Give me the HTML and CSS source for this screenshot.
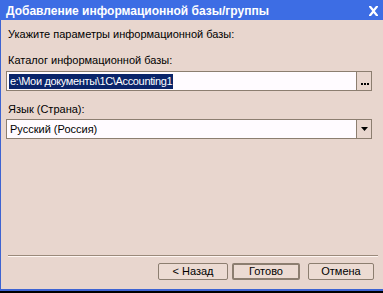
FILE: index.html
```html
<!DOCTYPE html>
<html>
<head>
<meta charset="utf-8">
<link rel="stylesheet" href="styles.css">
</head>
<body>
<div class="window">
  <div class="titlebar">
    <span class="title">Добавление информационной базы/группы</span>
    <svg class="close" width="11" height="10" viewBox="0 0 11 10">
      <path d="M1 0 H3 L5.5 3 L8 0 H10 V1 L6.8 5 L10 9 V10 H8 L5.5 7 L3 10 H1 V9 L4.2 5 L1 1 Z" fill="#fff"/>
    </svg>
  </div>
  <div class="content">
    <div class="intro">Укажите параметры информационной базы:</div>
    <div class="label">Каталог информационной базы:</div>
    <div class="field">
      <div class="value"><span class="selected">e:\Мои документы\1C\Accounting1</span></div>
      <div class="btn-side">
        <svg width="8" height="2" viewBox="0 0 8 2" class="dots"><rect x="0" y="0" width="2" height="2" fill="#000"/><rect x="3" y="0" width="2" height="2" fill="#000"/><rect x="6" y="0" width="2" height="2" fill="#000"/></svg>
      </div>
    </div>
    <div class="label label2">Язык (Страна):</div>
    <div class="field combo">
      <div class="value">Русский (Россия)</div>
      <div class="btn-side">
        <svg width="7" height="4" viewBox="0 0 7 4"><path d="M0 0 H7 L3.5 4 Z" fill="#000"/></svg>
      </div>
    </div>
    <div class="spacer"></div>
    <div class="separator"></div>
    <div class="buttons">
      <div class="button back">&lt; Назад</div>
      <div class="button default">Готово</div>
      <div class="button cancel">Отмена</div>
    </div>
  </div>
  <div class="bottom-edge"></div>
</div>
</body>
</html>
```
FILE: styles.css
```css
html, body {
  margin: 0;
  padding: 0;
  background: #000;
}
.window {
  width: 383px;
  height: 293px;
  overflow: hidden;
  display: flex;
  flex-direction: column;
  font-family: "Liberation Sans", Arial, sans-serif;
  font-size: 11px;
  color: #000;
}
.titlebar {
  height: 20px;
  flex: none;
  background: #3d6de4;
  display: flex;
  align-items: center;
  padding-left: 6px;
  padding-right: 4px;
}
.title {
  color: #fff;
  font-weight: bold;
  font-size: 12px;
  flex: 1;
  line-height: 20px;
  padding-top: 1px;
}
.close {
  margin-top: 1px;
}
.content {
  flex: 1;
  background: #e8d6ce;
  border-left: 1px solid #3d63d2;
  display: flex;
  flex-direction: column;
  padding: 0 11px 0 5px;
}
.intro {
  margin-top: 8px;
  margin-left: 2px;
  line-height: 13px;
}
.label {
  margin-top: 13px;
  margin-left: 2px;
  line-height: 13px;
}
.label2 {
  margin-top: 12px;
}
.field {
  margin-top: 4px;
  height: 20px;
  box-sizing: border-box;
  border: 1px solid #8c7e70;
  background: #fffbff;
  display: flex;
}
.field.combo {
  margin-top: 3px;
}
.value {
  flex: 1;
  padding-left: 2px;
  display: flex;
  align-items: center;
  line-height: 13px;
}
.combo .value {
  padding-left: 3px;
}
.selected {
  background: #0a246a;
  color: #fff;
  padding: 1px 1px 1px 1px;
  line-height: 13px;
  letter-spacing: -0.35px;
}
.btn-side {
  width: 14px;
  border-left: 1px solid #8c7e70;
  background: #e8d6ce;
  display: flex;
  align-items: center;
  justify-content: center;
}
.dots {
  margin-top: 5px;
  margin-left: 1px;
}
.spacer {
  flex: 1;
}
.separator {
  height: 1px;
  background: #9a8a7b;
  border-bottom: 1px solid #fff6f2;
  margin-left: 2px;
  margin-right: -6px;
}
.buttons {
  display: flex;
  justify-content: flex-end;
  margin-top: 6px;
  margin-bottom: 9px;
  margin-right: -2px;
}
.button {
  box-sizing: border-box;
  height: 17px;
  border: 1px solid #8c7e70;
  border-radius: 2px;
  background: #ecdbd3;
  text-align: center;
  line-height: 15px;
  font-size: 11px;
}
.button.back {
  width: 70px;
}
.button.default {
  border: 2px solid #8c7e70;
  line-height: 13px;
  width: 68px;
  margin-left: 4px;
}
.button.cancel {
  width: 66px;
  margin-left: 8px;
}
.bottom-edge {
  height: 4px;
  flex: none;
  background: linear-gradient(#3d63d2 0, #3d63d2 2px, #000 2px);
}
```
